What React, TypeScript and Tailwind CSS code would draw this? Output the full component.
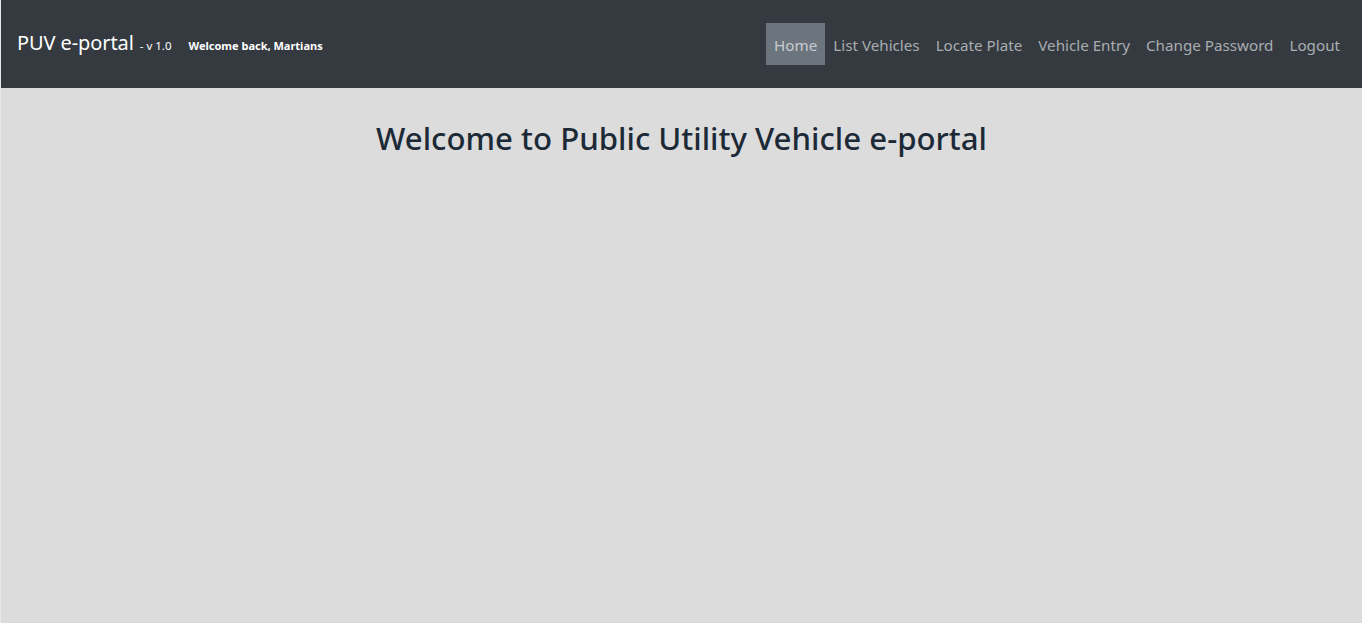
import React from 'react';

const links = ['Home', 'List Vehicles', 'Locate Plate', 'Vehicle Entry', 'Change Password', 'Logout'];

const App = () => (
  <div className="min-h-[623px] w-full bg-[#dcdcdc] font-['Noto_Sans',sans-serif] border-l border-[#e8e8e8]">
    <nav className="h-[88px] bg-[#343a40] flex items-center justify-between pl-[16px] pr-[14px]">
      <div className="flex items-baseline text-white -mt-[3px]">
        <span className="text-[20px] tracking-[-0.1px]">PUV e-portal</span>
        <span className="text-[11.5px] ml-[6px]">- v 1.0</span>
        <span className="text-[11px] font-bold ml-[17px]">Welcome back, Martians</span>
      </div>
      <ul className="flex items-center">
        {links.map((l, i) => (
          <li
            key={l}
            className={
              i === 0
                ? 'h-[42px] flex items-center pt-[3px] px-[8px] bg-[#6c757d] text-[#c8ccd0] text-[15.2px]'
                : 'h-[42px] flex items-center pt-[3px] px-[8px] text-[#a9adb1] text-[15.2px]'
            }
          >
            {l}
          </li>
        ))}
      </ul>
    </nav>
    <h1 className="text-center text-[31.2px] font-medium text-[#1c2a38] mt-[27px]">
      Welcome to Public Utility Vehicle e-portal
    </h1>
  </div>
);

export default App;
